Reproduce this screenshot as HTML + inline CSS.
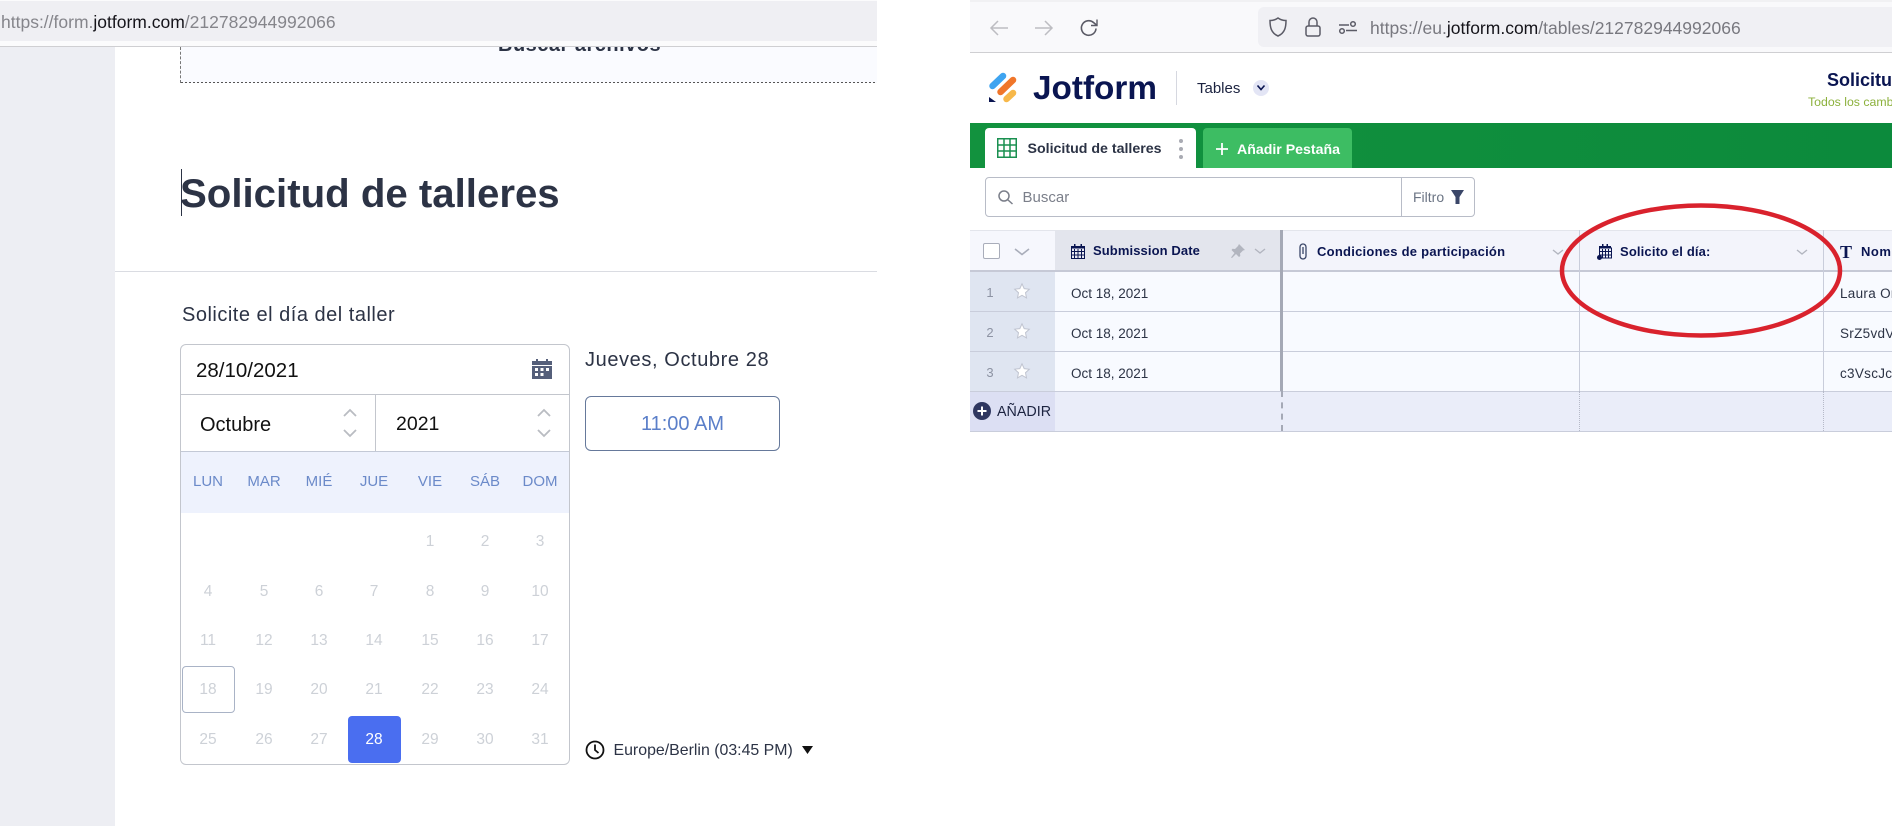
<!DOCTYPE html>
<html lang="es">
<head>
<meta charset="utf-8">
<title>Solicitud de talleres</title>
<style>
html,body{margin:0;padding:0;background:#fff}
body{width:1892px;height:826px;position:relative;overflow:hidden;font-family:"Liberation Sans",sans-serif}
.a{position:absolute}
.t{position:absolute;white-space:nowrap;line-height:1}
svg{position:absolute;overflow:visible}
.wd{position:absolute;top:474px;width:56px;text-align:center;font-size:15px;line-height:16px;color:#6b8ac9}
.d{position:absolute;width:56px;text-align:center;font-size:15.5px;line-height:16px;color:#cdd1d7}
.hd{position:absolute;white-space:nowrap;font-weight:bold;font-size:13px;line-height:14px;color:#0a1551}
.cell{position:absolute;white-space:nowrap;font-size:13.5px;line-height:14px;color:#2c3345}
.n{position:absolute;width:20px;text-align:center;font-size:13px;line-height:14px;color:#8d93a3}
.hl{position:absolute;height:1px;left:970px;width:922px;background:#c9cddb}
</style>
</head>
<body>

<!-- LEFT PANEL -->
<div class="a" id="left" style="left:0;top:0;width:877px;height:826px;overflow:hidden;background:#fff">
  <div class="a" style="left:0;top:46px;width:115px;height:780px;background:#edeef3"></div>
  <div class="a" style="left:180px;top:47px;width:697px;height:36px;background:#fafbff;border-left:1px dashed #777;box-sizing:border-box"></div>
  <div class="a" style="left:181px;top:82px;width:696px;height:1px;background:repeating-linear-gradient(90deg,#555 0 2px,transparent 2px 4px)"></div>
  <div class="t" style="left:498px;top:35px;font-size:20px;font-weight:bold;color:#2c3345;letter-spacing:.5px">Buscar archivos</div>
  <div class="a" style="left:0;top:0;width:877px;height:46px;background:#fbfbfc"></div>
  <div class="a" style="left:0;top:1px;width:877px;height:40px;background:#efeff3"></div>
  <div class="a" style="left:0;top:46px;width:877px;height:1px;background:#cfcfd2"></div>
  <div class="t" style="left:1px;top:14px;font-size:17.5px;color:#85858b">https://form.<span style="color:#15141a">jotform.com</span>/212782944992066</div>

  <div class="a" style="left:181px;top:169px;width:1px;height:47px;background:#2c3345"></div>
  <div class="t" style="left:180px;top:174px;font-size:40.2px;font-weight:bold;color:#2c3345">Solicitud de talleres</div>
  <div class="a" style="left:115px;top:271px;width:762px;height:1px;background:#dadce2"></div>
  <div class="t" style="left:182px;top:305px;font-size:20px;color:#2c3345;letter-spacing:.5px">Solicite el día del taller</div>

  <!-- date box -->
  <div class="a" style="left:180px;top:344px;width:390px;height:421px;box-sizing:border-box;border:1px solid #c3c6cd;border-radius:6px;background:#fff"></div>
  <div class="a" style="left:181px;top:394px;width:388px;height:1px;background:#c3c6cd"></div>
  <div class="a" style="left:375px;top:395px;width:1px;height:56px;background:#c3c6cd"></div>
  <div class="a" style="left:181px;top:451px;width:388px;height:62px;background:#eef2fd;border-top:1px solid #c3c9d6;box-sizing:border-box"></div>
  <div class="t" style="left:196px;top:361px;font-size:20.5px;color:#111">28/10/2021</div>
  <svg style="left:532px;top:359px" width="20" height="20" viewBox="0 0 20 20"><path d="M4 0h2v2h8V0h2v2h4v4H0V2h4z" fill="#555f7a"/><path fill-rule="evenodd" d="M0 7h20v13H0zM3 9v3h3V9zM8.500 9v3h3V9zM14 9v3h3V9zM3 14v3h3v-3zM8.500 14v3h3v-3z" fill="#555f7a"/></svg>
  <div class="t" style="left:200px;top:415px;font-size:20px;color:#111">Octubre</div>
  <div class="t" style="left:396px;top:415px;font-size:19.500px;color:#111">2021</div>
  <svg style="left:343px;top:408px" width="14" height="30" fill="none" stroke="#b9bcc2" stroke-width="1.800"><path d="M1 8 7 2l6 6M1 22l6 6 6-6"/></svg>
  <svg style="left:537px;top:408px" width="14" height="30" fill="none" stroke="#b9bcc2" stroke-width="1.800"><path d="M1 8 7 2l6 6M1 22l6 6 6-6"/></svg>

  <div class="wd" style="left:180px">LUN</div><div class="wd" style="left:236px">MAR</div><div class="wd" style="left:291px">MIÉ</div><div class="wd" style="left:346px">JUE</div><div class="wd" style="left:402px">VIE</div><div class="wd" style="left:457px">SÁB</div><div class="wd" style="left:512px">DOM</div>

  <div class="d" style="left:402px;top:534px">1</div><div class="d" style="left:457px;top:534px">2</div><div class="d" style="left:512px;top:534px">3</div>
  <div class="d" style="left:180px;top:584px">4</div><div class="d" style="left:236px;top:584px">5</div><div class="d" style="left:291px;top:584px">6</div><div class="d" style="left:346px;top:584px">7</div><div class="d" style="left:402px;top:584px">8</div><div class="d" style="left:457px;top:584px">9</div><div class="d" style="left:512px;top:584px">10</div>
  <div class="d" style="left:180px;top:633px">11</div><div class="d" style="left:236px;top:633px">12</div><div class="d" style="left:291px;top:633px">13</div><div class="d" style="left:346px;top:633px">14</div><div class="d" style="left:402px;top:633px">15</div><div class="d" style="left:457px;top:633px">16</div><div class="d" style="left:512px;top:633px">17</div>
  <div class="a" style="left:182px;top:666px;width:53px;height:47px;box-sizing:border-box;border:1px solid #a9b3c6;border-radius:4px"></div>
  <div class="d" style="left:180px;top:682px">18</div><div class="d" style="left:236px;top:682px">19</div><div class="d" style="left:291px;top:682px">20</div><div class="d" style="left:346px;top:682px">21</div><div class="d" style="left:402px;top:682px">22</div><div class="d" style="left:457px;top:682px">23</div><div class="d" style="left:512px;top:682px">24</div>
  <div class="a" style="left:348px;top:716px;width:53px;height:47px;background:#4a6ef0;border-radius:4px"></div>
  <div class="d" style="left:180px;top:732px">25</div><div class="d" style="left:236px;top:732px">26</div><div class="d" style="left:291px;top:732px">27</div><div class="d" style="left:346px;top:732px;color:#fff">28</div><div class="d" style="left:402px;top:732px">29</div><div class="d" style="left:457px;top:732px">30</div><div class="d" style="left:512px;top:732px">31</div>

  <div class="t" style="left:585px;top:350px;font-size:20px;color:#2c3345;letter-spacing:.6px">Jueves, Octubre 28</div>
  <div class="a" style="left:585px;top:396px;width:195px;height:55px;box-sizing:border-box;border:1px solid #66799b;border-radius:6px;text-align:center;font-size:20px;line-height:54px;color:#5b7fc9">11:00 AM</div>

  <svg style="left:585px;top:740px" width="20" height="20" viewBox="0 0 20 20" fill="none" stroke="#111" stroke-width="1.800"><circle cx="10" cy="10" r="8.500"/><path d="M10 4.500V10l3.500 3"/></svg>
  <div class="t" style="left:613.500px;top:743px;font-size:15.900px;color:#2c3345">Europe/Berlin (03:45 PM)</div>
  <svg style="left:802px;top:746px" width="11" height="8"><path d="M0 0h11L5.500 8z" fill="#111"/></svg>
</div>

<!-- RIGHT PANEL -->
<div class="a" id="right" style="left:970px;top:0;width:922px;height:52px;background:#f9f9fb;border-top:2px solid #f1f1f3;box-sizing:border-box"></div>
<div class="a" style="left:970px;top:52px;width:922px;height:1px;background:#cfcfd2"></div>
<div class="a" style="left:1258px;top:7px;width:634px;height:40px;background:#f0f0f4;border-radius:6px 0 0 6px"></div>
<svg style="left:990px;top:19px" width="18" height="18" fill="none" stroke="#bdbdc2" stroke-width="1.500"><path d="M18 9H1M8 2 1 9l7 7"/></svg>
<svg style="left:1035px;top:19px" width="18" height="18" fill="none" stroke="#bdbdc2" stroke-width="1.500"><path d="M0 9h17M10 2l7 7-7 7"/></svg>
<svg style="left:1080px;top:19px" width="18" height="18" fill="none" stroke="#5b5b66" stroke-width="1.600"><path d="M16 9.500A7.300 7.300 0 1 1 13.500 3.500L16.500 6"/><path d="M17 .5V6.500H11" stroke-width="1.400"/></svg>
<svg style="left:1269px;top:17px" width="18" height="20" fill="none" stroke="#5b5b66" stroke-width="1.500"><path d="M9 1C6.500 2.800 3.500 3.500 1 3.500 1 10 2 16 9 19 16 16 17 10 17 3.500 14.500 3.500 11.500 2.800 9 1z"/></svg>
<svg style="left:1305px;top:17px" width="16" height="20" fill="none" stroke="#5b5b66" stroke-width="1.500"><rect x="1" y="9" width="14" height="10" rx="2"/><path d="M4 9V5a4 4 0 0 1 8 0v4"/></svg>
<svg style="left:1339px;top:21px" width="18" height="13" fill="none" stroke="#5b5b66" stroke-width="1.500"><path d="M0 4h10"/><path d="M7 9.500h11"/><circle cx="14" cy="3" r="2.300"/><circle cx="3" cy="10" r="2.300"/></svg>
<div class="t" style="left:1370px;top:20px;font-size:17.500px;color:#78787f">https://eu.<span style="color:#15141a">jotform.com</span>/tables/212782944992066</div>

<!-- Header -->
<svg style="left:0;top:0" width="1892" height="110" fill="none" stroke-linecap="round" stroke-width="6.500"><path d="M992.500 86 1003 76" stroke="#3fa4f0"/><path d="M1000.500 92 1013 80" stroke="#f0762a"/><path d="M1006.500 99 1013 93" stroke="#f7b84a"/><path d="M989 97v5h7z" fill="#0a1551" stroke="none"/></svg>
<div class="t" style="left:1033px;top:72px;font-size:33.300px;font-weight:bold;color:#0a1551">Jotform</div>
<div class="a" style="left:1176px;top:71px;width:1px;height:34px;background:#d6d8e0"></div>
<div class="t" style="left:1197px;top:81px;font-size:15px;color:#1c2340">Tables</div>
<div class="a" style="left:1253px;top:80px;width:16px;height:16px;border-radius:50%;background:#e3e5f5"></div>
<svg style="left:1257px;top:85px" width="8" height="6" fill="none" stroke="#0a1551" stroke-width="1.600"><path d="M.5.500 4 4.500 7.500.5"/></svg>
<div class="t" style="left:1827px;top:71px;font-size:18px;font-weight:bold;color:#0a1551">Solicitu</div>
<div class="t" style="left:1808px;top:96px;font-size:12.300px;color:#8cb13c">Todos los cambios</div>

<!-- Green bar -->
<div class="a" style="left:970px;top:123px;width:922px;height:45px;background:linear-gradient(90deg,#12923e,#0c8a3c)"></div>
<div class="a" style="left:985px;top:128px;width:211px;height:40px;background:#fff;border-radius:4px 4px 0 0"></div>
<svg style="left:997px;top:138px" width="20" height="20" fill="none" stroke="#1a9050" stroke-width="1.500"><rect x=".75" y=".75" width="18.500" height="18.500"/><path d="M7 1v18M13 1v18M1 7h18M1 13h18"/></svg>
<div class="t" style="left:1027.500px;top:142px;font-size:14.200px;font-weight:bold;color:#2c3345">Solicitud de talleres</div>
<svg style="left:1178px;top:138px" width="6" height="22" fill="#a9abb3"><circle cx="3" cy="3" r="2"/><circle cx="3" cy="11" r="2"/><circle cx="3" cy="19" r="2"/></svg>
<div class="a" style="left:1203px;top:128px;width:149px;height:40px;background:#3dbd63;border-radius:4px 4px 0 0"></div>
<svg style="left:1216px;top:143px" width="12" height="12" fill="none" stroke="#fff" stroke-width="1.800"><path d="M6 0v12M0 6h12"/></svg>
<div class="t" style="left:1237px;top:142px;font-size:14.150px;font-weight:bold;color:#fff">Añadir Pestaña</div>

<!-- Search -->
<div class="a" style="left:985px;top:177px;width:490px;height:40px;box-sizing:border-box;border:1px solid #b8bcc7;border-radius:4px;background:#fff"></div>
<div class="a" style="left:1401px;top:178px;width:1px;height:38px;background:#b8bcc7"></div>
<svg style="left:998px;top:190px" width="15" height="14" fill="none" stroke="#7b7f8a" stroke-width="1.500"><circle cx="6" cy="6" r="5"/><path d="M9.500 9.500 14.500 14"/></svg>
<div class="t" style="left:1022.500px;top:190px;font-size:15px;color:#7b7f8a">Buscar</div>
<div class="t" style="left:1413px;top:190px;font-size:14px;color:#6b7484">Filtro</div>
<svg style="left:1451px;top:190px" width="13" height="14"><path d="M0 0h13L8.500 7v7h-4V7z" fill="#3a4668"/></svg>

<!-- Table -->
<div class="a" style="left:970px;top:230px;width:85px;height:41px;background:#f6f7fd"></div>
<div class="a" style="left:1055px;top:230px;width:226px;height:41px;background:#e3e5ed"></div>
<div class="a" style="left:1283px;top:230px;width:609px;height:41px;background:#f3f4fb"></div>
<div class="a" style="left:970px;top:271px;width:85px;height:120px;background:#dfe5f1"></div>
<div class="a" style="left:1055px;top:271px;width:837px;height:120px;background:#f8faff"></div>
<div class="a" style="left:970px;top:391px;width:85px;height:40px;background:#dcdff3"></div>
<div class="a" style="left:1055px;top:391px;width:837px;height:40px;background:#eaedf9"></div>
<div class="hl" style="top:230px;background:#e3e5ec"></div>
<div class="hl" style="top:270px;height:2px;background:#c6c9d6"></div>
<div class="hl" style="top:311px"></div>
<div class="hl" style="top:351px"></div>
<div class="hl" style="top:391px"></div>
<div class="hl" style="top:431px"></div>
<div class="a" style="left:1280px;top:230px;width:3px;height:161px;background:#a5a9b6"></div>
<div class="a" style="left:1281px;top:391px;width:0;height:40px;border-left:2px dashed #a5a9b6"></div>
<div class="a" style="left:1579px;top:230px;width:1px;height:161px;background:#c9cddb"></div>
<div class="a" style="left:1823px;top:230px;width:1px;height:161px;background:#c9cddb"></div>
<div class="a" style="left:1579px;top:391px;width:0;height:40px;border-left:1px dotted #b5b9c8"></div>
<div class="a" style="left:1823px;top:391px;width:0;height:40px;border-left:1px dotted #b5b9c8"></div>

<div class="a" style="left:983px;top:243px;width:17px;height:16px;box-sizing:border-box;border:1.500px solid #a9adba;border-radius:2px;background:#fff"></div>
<svg style="left:1015px;top:249px" width="14" height="6" fill="none" stroke="#a9adba" stroke-width="1.600"><path d="M0 0 7 5.500 14 0"/></svg>

<svg style="left:1071px;top:244px" width="14" height="15" viewBox="0 0 14 15"><path d="M3 0h1.500v2h5V0H11v2h3v3H0V2h3z" fill="#0a1551"/><rect x=".5" y="4" width="13" height="10.500" fill="#e8e9f2" stroke="#0a1551"/><path d="M3.500 5v9M7 5v9M10.500 5v9M1 7.500h12M1 11h12" stroke="#0a1551"/></svg>
<div class="hd" style="left:1093px;top:244px;letter-spacing:.1px">Submission Date</div>
<svg style="left:1231px;top:244px" width="14" height="14" fill="#b2b5bf"><path d="M8 0l6 6-2 .5-3 3 .3 2.500-1.300 1-3-3L1 14l-1-.5 3.500-4.500-3-3 1-1.300 2.500.3 3-3z"/></svg>
<svg style="left:1255px;top:249px" width="10" height="5" fill="none" stroke="#b2b5bf" stroke-width="1.400"><path d="M0 0l5 4 5-4"/></svg>

<svg style="left:1299px;top:243px" width="8" height="17" fill="none" stroke="#3a4668" stroke-width="1.300"><path d="M1 4a3 3 0 0 1 6 0v9a3 3 0 0 1-6 0z"/><path d="M4 4v7"/></svg>
<div class="hd" style="left:1317px;top:245px;letter-spacing:.25px">Condiciones de participación</div>
<svg style="left:1553px;top:250px" width="10" height="5" fill="none" stroke="#b2b5bf" stroke-width="1.400"><path d="M0 0l5 4 5-4"/></svg>

<svg style="left:1597px;top:244px" width="15" height="16" viewBox="0 0 15 16"><path d="M5 0h1.500v2h3V0H11v2h3v3H2V2h3z" fill="#0a1551"/><rect x="2.500" y="4" width="12" height="10" fill="#eceef7" stroke="#0a1551"/><path d="M5.500 5v9M8.500 5v9M11.500 5v9M3 7.500h11M3 11h11" stroke="#0a1551"/><circle cx="2.500" cy="13.500" r="2.500" fill="#0a1551"/></svg>
<div class="hd" style="left:1620px;top:245px;letter-spacing:.15px">Solicito el día:</div>
<svg style="left:1797px;top:250px" width="10" height="5" fill="none" stroke="#b2b5bf" stroke-width="1.400"><path d="M0 0l5 4 5-4"/></svg>

<div class="t" style="left:1840px;top:243px;font-family:'Liberation Serif',serif;font-weight:bold;font-size:18px;color:#0a1551">T</div>
<div class="hd" style="left:1861px;top:245px;width:31px;overflow:hidden;letter-spacing:.5px">Nombre</div>

<div class="n" style="left:980px;top:286px">1</div>
<div class="n" style="left:980px;top:326px">2</div>
<div class="n" style="left:980px;top:366px">3</div>
<svg style="left:1014px;top:283px" width="16" height="16" fill="#fff" stroke="#c0c4d0" stroke-width="1"><path d="M8 .8l2.200 4.800 5.100.6-3.800 3.500 1 5.200L8 12.300l-4.500 2.600 1-5.200L.7 6.200l5.100-.6z"/></svg>
<svg style="left:1014px;top:323px" width="16" height="16" fill="#fff" stroke="#c0c4d0" stroke-width="1"><path d="M8 .8l2.200 4.800 5.100.6-3.800 3.500 1 5.200L8 12.300l-4.500 2.600 1-5.200L.7 6.200l5.100-.6z"/></svg>
<svg style="left:1014px;top:363px" width="16" height="16" fill="#fff" stroke="#c0c4d0" stroke-width="1"><path d="M8 .8l2.200 4.800 5.100.6-3.800 3.500 1 5.200L8 12.300l-4.500 2.600 1-5.200L.7 6.200l5.100-.6z"/></svg>
<div class="cell" style="left:1071px;top:287px">Oct 18, 2021</div>
<div class="cell" style="left:1071px;top:327px">Oct 18, 2021</div>
<div class="cell" style="left:1071px;top:367px">Oct 18, 2021</div>
<div class="cell" style="left:1840px;top:287px;width:52px;overflow:hidden;letter-spacing:.3px">Laura Ortega</div>
<div class="cell" style="left:1840px;top:327px;width:52px;overflow:hidden;letter-spacing:.3px">SrZ5vdVxyz</div>
<div class="cell" style="left:1840px;top:367px;width:52px;overflow:hidden;letter-spacing:.3px">c3VscJcabc</div>

<svg style="left:973px;top:402px" width="18" height="18"><circle cx="9" cy="9" r="9" fill="#2f3760"/><path d="M9 4.500v9M4.500 9h9" stroke="#fff" stroke-width="2"/></svg>
<div class="t" style="left:997px;top:405px;font-size:14.300px;color:#1c2340">AÑADIR</div>

<!-- Red ellipse -->
<svg style="left:0;top:0" width="1892" height="826" fill="none"><ellipse cx="1701" cy="270.500" rx="139" ry="65" stroke="#d9222d" stroke-width="4.500"/></svg>

</body>
</html>
